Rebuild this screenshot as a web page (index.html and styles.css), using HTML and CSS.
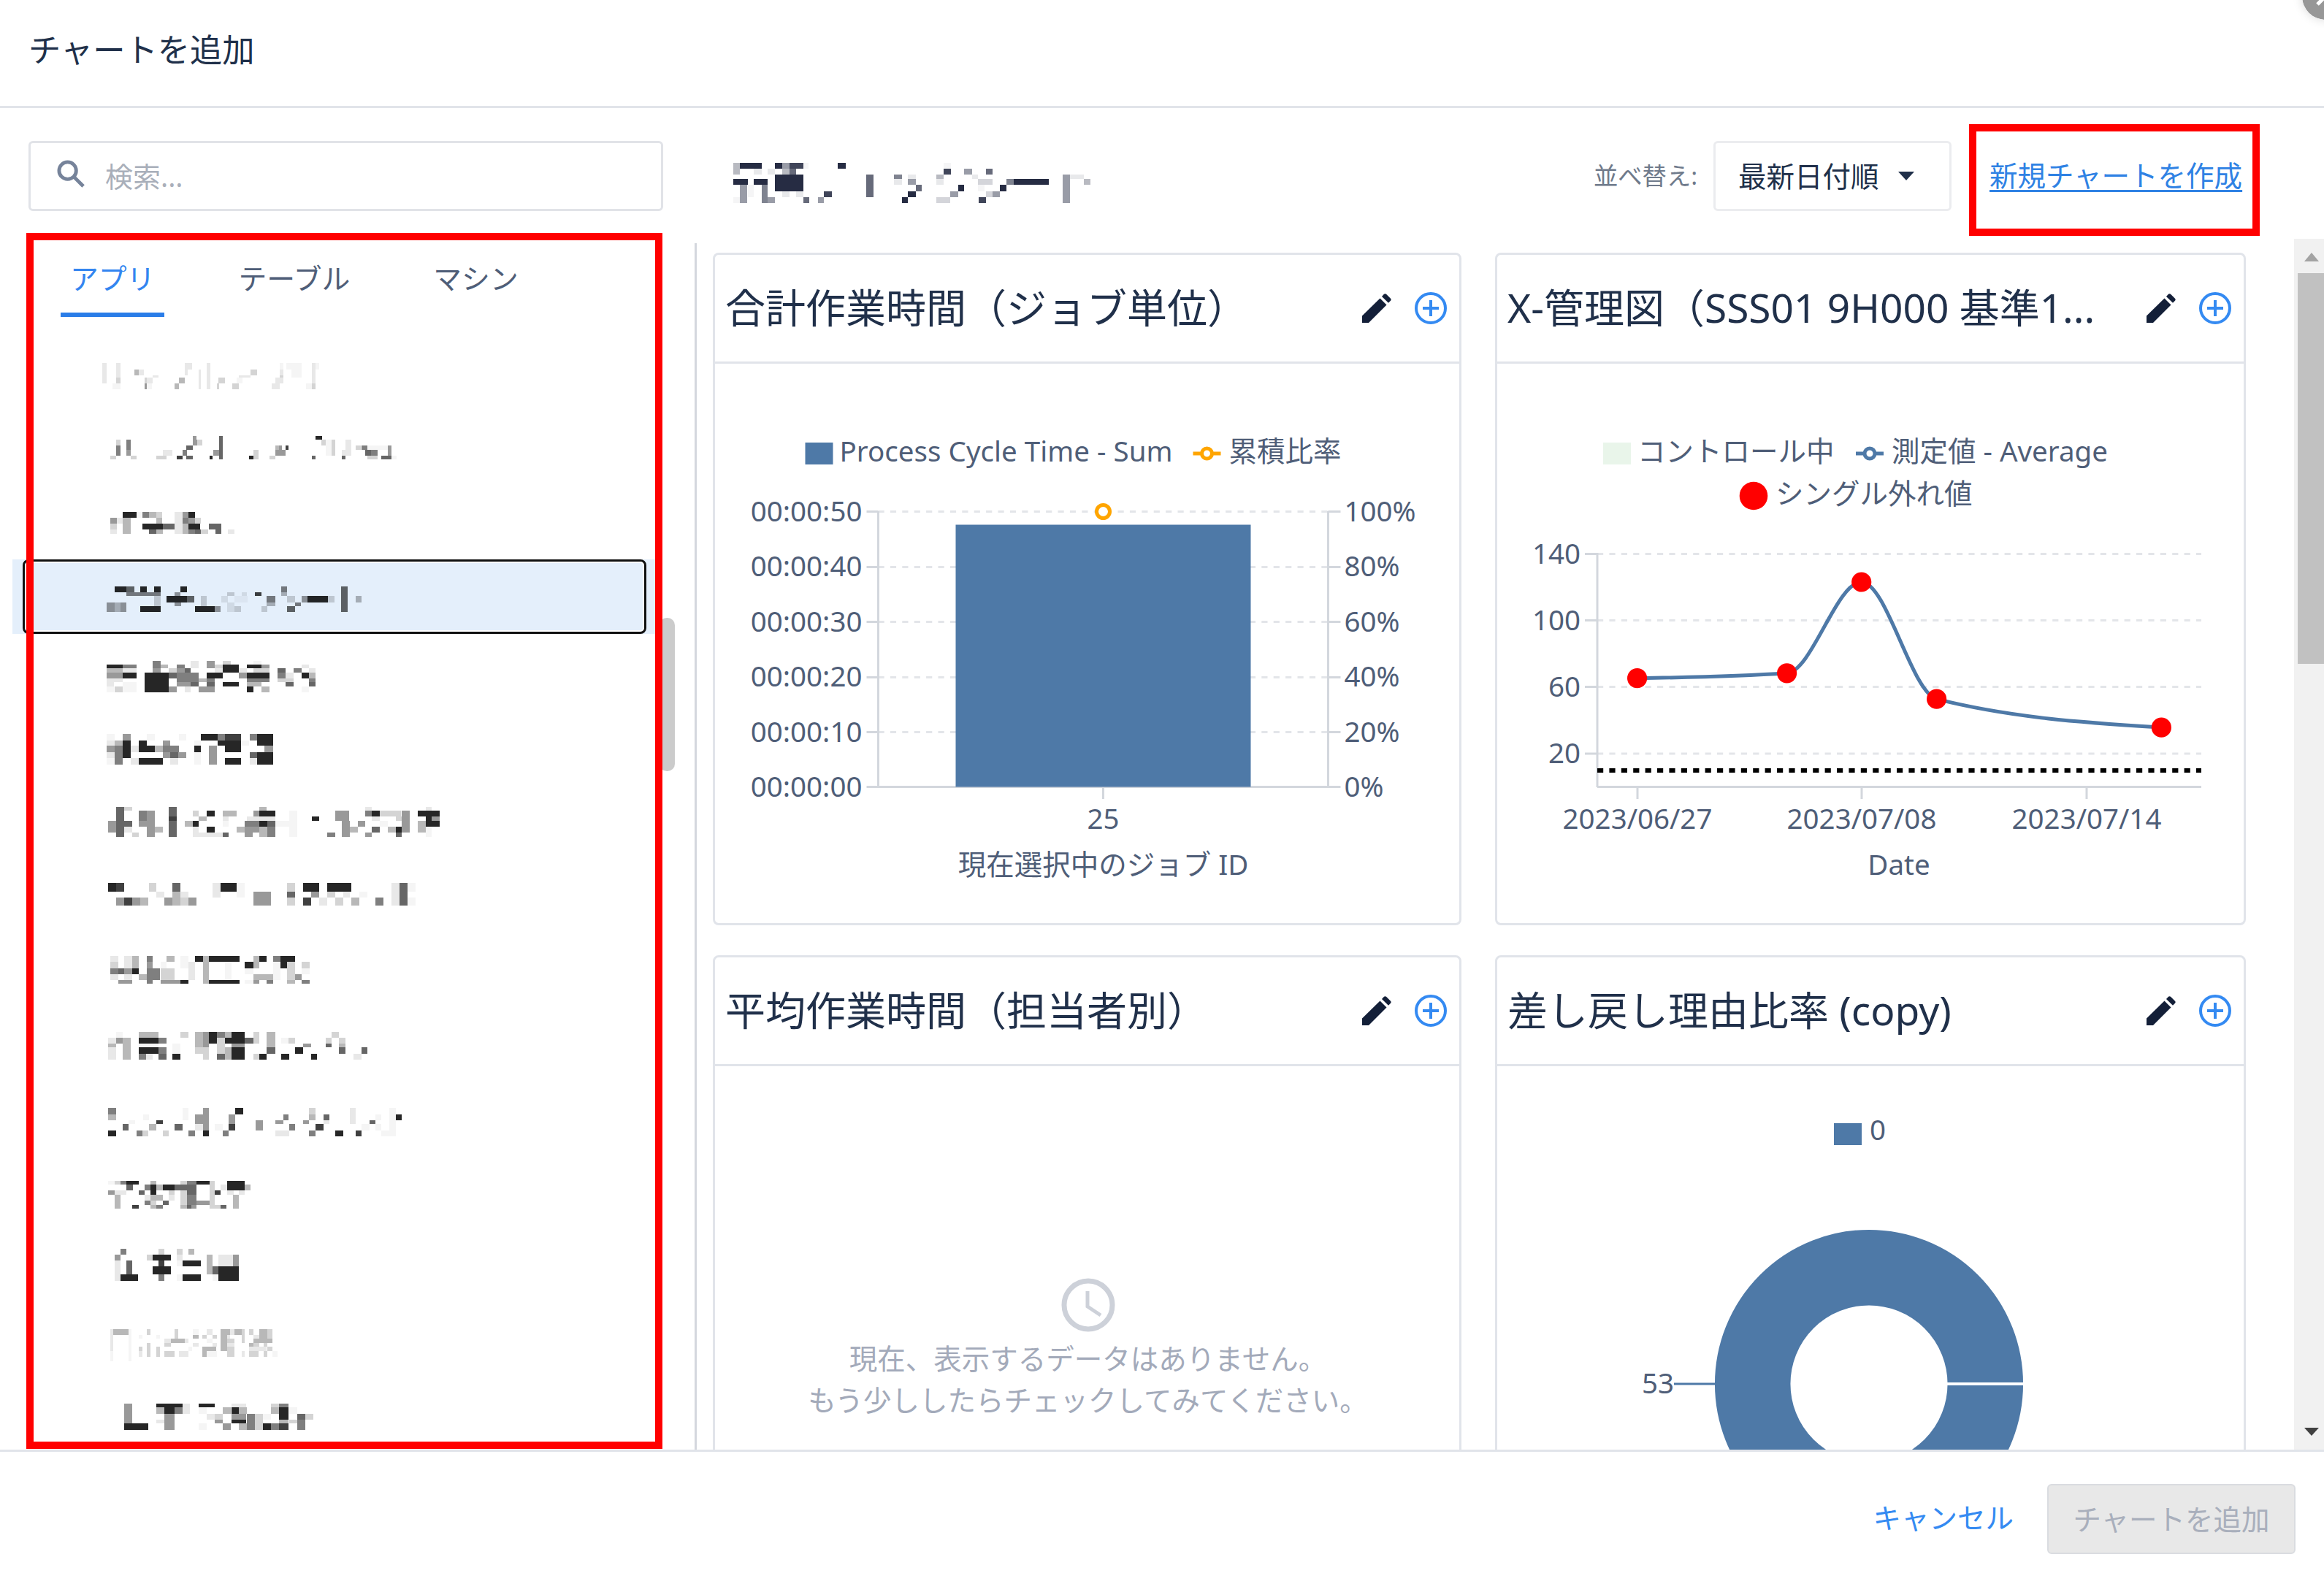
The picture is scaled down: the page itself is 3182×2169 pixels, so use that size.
FILE: index.html
```html
<!DOCTYPE html>
<html lang="ja">
<head>
    <meta charset="UTF-8">
    <meta name="viewport" content="width=device-width, initial-scale=1.0">
    <title>チャートを追加</title>
    <link rel="stylesheet" href="styles.css">
</head>
<body>
    <svg class="defs">
        <symbol id="pencil" viewBox="0 0 40 40">
            <path d="M0 40v-9.500L24.500 6.500l9 9L9 40z"/>
            <path d="M27 4l3-3.200q1.500-1.200 3 0l6 6q1.300 1.500 0 3L36 12.800z"/>
        </symbol>
        <symbol id="plus" viewBox="0 0 44 44">
            <circle cx="22" cy="22" r="20"/>
            <path d="M22 11v22M11 22h22"/>
        </symbol>
    </svg>

    <div class="modal">
        <div class="header">チャートを追加</div>

        <div class="toolbar">
            <div class="search">
                <svg class="search-icon" viewBox="0 0 40 40"><circle cx="15" cy="15" r="12"/><path d="M24 24l13 13"/></svg>
                <span>検索...</span>
            </div>
            <svg class="mosaic heading" id="heading" viewBox="88 248 706 164" preserveAspectRatio="none"></svg>
            <div class="sort-label">並べ替え:</div>
            <div class="select">最新日付順<span class="caret"></span></div>
            <a class="new-chart">新規チャートを作成</a>
        </div>

        <div class="content">
            <div class="sidebar">
                <div class="tabs">
                    <div class="tab active">アプリ</div>
                    <div class="tab">テーブル</div>
                    <div class="tab">マシン</div>
                </div>
                <div class="list" id="list"></div>
                <div class="side-thumb"></div>
            </div>
            <div class="divider"></div>

            <div class="cards">
                <div class="card">
                    <div class="card-header">
                        <span class="card-title">合計作業時間（ジョブ単位）</span>
                        <svg class="pencil"><use href="#pencil"/></svg>
                        <svg class="plus"><use href="#plus"/></svg>
                    </div>
                    <svg class="chart" viewBox="980 498 1018 766">
                        <rect class="bar" x="1103" y="606" width="38" height="30"/>
                        <text x="1150" y="632" textLength="456">Process Cycle Time - Sum</text>
                        <path class="orange" d="M1634 621h38"/>
                        <circle class="orange" cx="1653" cy="621" r="7"/>
                        <text x="1683" y="632">累積比率</text>
                        <path class="grid" d="M1203 700.500h616M1203 776.500h616M1203 851.500h616M1203 927.500h616M1203 1002.500h616"/>
                        <path class="axis" d="M1187 700.500h16M1187 776.500h16M1187 851.500h16M1187 927.500h16M1187 1002.500h16M1187 1077.500h649M1819 700.500h17M1819 776.500h17M1819 851.500h17M1819 927.500h17M1819 1002.500h17M1203 700v378M1819 700v378M1511 1078v16"/>
                        <rect class="bar" x="1309" y="718.500" width="404" height="359"/>
                        <circle class="orange" cx="1511" cy="700.500" r="9"/>
                        <g class="end">
                            <text x="1181" y="714">00:00:50</text>
                            <text x="1181" y="789">00:00:40</text>
                            <text x="1181" y="865">00:00:30</text>
                            <text x="1181" y="940">00:00:20</text>
                            <text x="1181" y="1016">00:00:10</text>
                            <text x="1181" y="1091">00:00:00</text>
                        </g>
                        <text x="1841" y="714">100%</text>
                        <text x="1841" y="789">80%</text>
                        <text x="1841" y="865">60%</text>
                        <text x="1841" y="940">40%</text>
                        <text x="1841" y="1016">20%</text>
                        <text x="1841" y="1091">0%</text>
                        <text class="mid" x="1511" y="1135">25</text>
                        <text class="mid" x="1511" y="1198">現在選択中のジョブ ID</text>
                    </svg>
                </div>

                <div class="card">
                    <div class="card-header">
                        <span class="card-title">X-管理図（SSS01 9H000 基準1...</span>
                        <svg class="pencil"><use href="#pencil"/></svg>
                        <svg class="plus"><use href="#plus"/></svg>
                    </div>
                    <svg class="chart" viewBox="2050 498 1022 766">
                        <rect class="control" x="2195" y="606" width="38" height="30"/>
                        <text x="2242" y="632">コントロール中</text>
                        <path class="line" d="M2541 621h38"/>
                        <circle class="line open" cx="2560" cy="621" r="7"/>
                        <text x="2590" y="632">測定値 - Average</text>
                        <circle class="red" cx="2401" cy="679" r="19.300"/>
                        <text x="2431" y="690">シングル外れ値</text>
                        <path class="grid" d="M2187 758.500h827M2187 849.500h827M2187 940.500h827M2187 1032h827"/>
                        <path class="axis" d="M2170 758.500h17M2170 849.500h17M2170 940.500h17M2170 1032h17M2187 757v321M2187 1077.500h827M2242 1078v16M2549 1078v16M2857 1078v16"/>
                        <path class="limit" d="M2187 1055h827"/>
                        <path class="line" d="M2241.600 928.700C2310 927.600 2378.300 926.400 2446.600 921.800C2480.600 919.500 2514.700 797 2548.700 797C2583 797 2617.300 948.500 2651.600 957.200C2754.200 983.300 2856.800 989.700 2959.400 996.200"/>
                        <circle class="red" cx="2241.600" cy="928.700" r="13.600"/>
                        <circle class="red" cx="2446.600" cy="921.800" r="13.600"/>
                        <circle class="red" cx="2548.700" cy="797" r="13.600"/>
                        <circle class="red" cx="2651.600" cy="957.200" r="13.600"/>
                        <circle class="red" cx="2959.400" cy="996.200" r="13.600"/>
                        <g class="end">
                            <text x="2164" y="772">140</text>
                            <text x="2164" y="863">100</text>
                            <text x="2164" y="954">60</text>
                            <text x="2164" y="1045">20</text>
                        </g>
                        <g class="mid">
                            <text x="2242" y="1135">2023/06/27</text>
                            <text x="2549" y="1135">2023/07/08</text>
                            <text x="2857" y="1135">2023/07/14</text>
                            <text x="2600" y="1198">Date</text>
                        </g>
                    </svg>
                </div>

                <div class="card">
                    <div class="card-header">
                        <span class="card-title">平均作業時間（担当者別）</span>
                        <svg class="pencil"><use href="#pencil"/></svg>
                        <svg class="plus"><use href="#plus"/></svg>
                    </div>
                    <div class="empty">
                        <svg class="clock" viewBox="0 0 74 74"><circle cx="37" cy="37" r="33"/><path d="M36 18v21l18 12"/></svg>
                        <div>現在、表示するデータはありません。</div>
                        <div>もう少ししたらチェックしてみてください。</div>
                    </div>
                </div>

                <div class="card">
                    <div class="card-header">
                        <span class="card-title">差し戻し理由比率 (copy)</span>
                        <svg class="pencil"><use href="#pencil"/></svg>
                        <svg class="plus"><use href="#plus"/></svg>
                    </div>
                    <svg class="chart" viewBox="2050 1460 1022 766">
                        <rect class="bar" x="2511" y="1538" width="38" height="30"/>
                        <text x="2560" y="1561">0</text>
                        <circle class="donut" cx="2559" cy="1895" r="159.300"/>
                        <path class="cut" d="M2666 1895h105"/>
                        <path class="leader" d="M2292 1895h56"/>
                        <text class="end" x="2292" y="1908">53</text>
                    </svg>
                </div>
            </div>

            <div class="scrollbar">
                <span class="arrow-up"></span>
                <div class="thumb"></div>
                <span class="arrow-down"></span>
            </div>
        </div>

        <div class="footer">
            <div class="cancel">キャンセル</div>
            <div class="submit">チャートを追加</div>
        </div>

        <svg class="close" viewBox="0 0 64 64"><circle cx="32" cy="32" r="32"/><path d="M21 43l22-22M21 21l22 22"/></svg>
        <div class="mark mark-list"></div>
        <div class="mark mark-link"></div>
    </div>
    <script src="mosaic.js"></script>
</body>
</html>
```
FILE: styles.css
```css
*, *::after{
    box-sizing: border-box;
}
body{
    margin: 0px;
    background-color: #fff;
    color: #4f5e78;
    font-family: "Noto Sans", "Noto Sans CJK JP", sans-serif;
    font-size: 38.5px;
    line-height: 57px;
}
.defs{
    display: none;
}
.modal{
    position: relative;
    width: 3182px;
    height: 2169px;
    overflow: hidden;
    display: flex;
    flex-direction: column;
}
.header{
    height: 148px;
    padding: 40px 39px;
    border-bottom: solid 3px #e1e4ea;
    font-size: 44.3px;
    color: #20304a;
}
.toolbar{
    height: 179px;
    display: flex;
    align-items: flex-start;
    padding-top: 45px;
    white-space: nowrap;
}
.search{
    width: 869px;
    height: 96px;
    margin-left: 39px;
    padding-left: 36px;
    display: flex;
    align-items: center;
    border: solid 3px #e1e3e8;
    border-radius: 6px;
    font-size: 38px;
    color: #a9afba;
}
.search-icon{
    width: 39px;
    height: 39px;
    margin: -6px 27px 0px 0px;
    fill: none;
    stroke: #76839a;
    stroke-width: 5;
}
.mosaic{
    display: block;
    shape-rendering: crispEdges;
}
.heading{
    width: 495px;
    height: 55px;
    margin: 30px 0px 0px 94px;
    fill: #000722;
}
.sort-label{
    width: 164px;
    margin-left: 685px;
    font-size: 33.3px;
    line-height: 94px;
    color: #6f7a8b;
}
.select{
    width: 326px;
    height: 96px;
    padding-left: 31px;
    display: flex;
    align-items: center;
    border: solid 3px #ebecef;
    border-radius: 6px;
    color: #20304a;
}
.caret{
    margin-left: 26px;
    border: solid 11px transparent;
    border-top: solid 12px #20304a;
    border-bottom: none;
}
.new-chart{
    margin-left: 52px;
    line-height: 94px;
    color: #2f82e4;
    text-decoration: underline;
    text-decoration-thickness: 3px;
    text-underline-offset: 5px;
}
.content{
    height: 1658px;
    display: flex;
    overflow: hidden;
}
.sidebar{
    position: relative;
    width: 951px;
}
.tabs{
    display: flex;
    height: 107px;
    margin-left: 83px;
    gap: 88px;
}
.tab{
    padding: 26px 13px 0px;
    font-size: 38.8px;
}
.active{
    color: #3385f0;
    border-bottom: solid 6px #2a7de8;
}
.list{
    margin: 27px 0px 0px 17px;
    width: 880px;
}
.item{
    height: 101.7px;
}
.item .mosaic{
    width: 880px;
    height: 101.7px;
}
.selected{
    position: relative;
    background-color: #e4effb;
}
.selected::after{
    content: "";
    position: absolute;
    left: 14px;
    top: 0px;
    width: 854px;
    height: 102px;
    border: solid 3px #101010;
    border-radius: 8px;
    box-shadow: inset 0px 0px 0px 2px #fff;
}
.side-thumb{
    position: absolute;
    left: 903px;
    top: 519px;
    width: 21px;
    height: 210px;
    border-radius: 10px;
    background-color: #cbcbcb;
}
.divider{
    width: 3px;
    margin-top: 6px;
    background-color: #d4d7de;
}
.cards{
    margin: 19px 0px 0px 22px;
    width: 2099px;
    display: grid;
    grid-template-columns: 1025px 1028px;
    grid-template-rows: 921px 921px;
    gap: 41px 46px;
}
.card{
    border: solid 3px #e1e4ea;
    border-radius: 8px;
}
.card-header{
    height: 149px;
    padding: 0px 17px 0px 14px;
    display: flex;
    align-items: center;
    border-bottom: solid 3px #e1e4ea;
}
.card-title{
    flex: 1;
    margin-top: -3px;
    font-size: 55px;
    white-space: nowrap;
    color: #20304a;
}
.pencil{
    width: 40px;
    height: 40px;
    fill: #131f38;
}
.plus{
    width: 44px;
    height: 44px;
    margin-left: 32px;
    fill: none;
    stroke: #348af2;
    stroke-width: 4;
}
.chart{
    display: block;
    width: 100%;
    height: 766px;
}
.chart text{
    fill: #4f5e78;
    font-size: 38.5px;
}
.bar{
    fill: #4e79a7;
}
.control{
    fill: #e9f5ea;
}
.grid, .axis{
    fill: none;
    stroke: #d3d7dd;
    stroke-width: 3;
}
.grid{
    stroke: #e3e5e9;
    stroke-dasharray: 8.2;
}
.orange{
    fill: #fff;
    stroke: #ffa500;
    stroke-width: 5;
}
.line{
    fill: none;
    stroke: #4e79a7;
    stroke-width: 5;
}
.open{
    fill: #fff;
}
.red{
    fill: #f00;
}
.limit{
    stroke: #000;
    stroke-width: 6;
    stroke-dasharray: 8.2;
}
.donut{
    fill: none;
    stroke: #4e79a7;
    stroke-width: 103.5;
}
.cut{
    stroke: #fff;
    stroke-width: 4;
}
.leader{
    stroke: #4e79a7;
    stroke-width: 3;
}
.end{
    text-anchor: end;
}
.mid{
    text-anchor: middle;
}
.empty{
    padding: 290px 0px 0px 2px;
    text-align: center;
    color: #a3aaba;
}
.clock{
    display: block;
    width: 74px;
    height: 74px;
    margin: 0px auto 8px;
    fill: none;
    stroke: #cdd1d9;
    stroke-width: 7;
}
.clock path{
    stroke-width: 5;
}
.scrollbar{
    width: 41px;
    margin-left: 66px;
    display: flex;
    flex-direction: column;
    align-items: center;
    background-color: #f1f1f1;
}
.thumb{
    width: 36px;
    height: 535px;
    margin: 16px 0px auto 5px;
    background-color: #c1c1c1;
}
.arrow-up, .arrow-down{
    margin: 19px 0px 0px 6px;
    border: solid 10px transparent;
}
.arrow-up{
    border-top: none;
    border-bottom: solid 12px #a3a3a3;
}
.arrow-down{
    margin: 0px 0px 19px 6px;
    border-bottom: none;
    border-top: solid 11px #404040;
}
.footer{
    height: 184px;
    padding: 44px 39px 0px 0px;
    display: flex;
    justify-content: flex-end;
    border-top: solid 3px #e1e4ea;
    line-height: 93px;
}
.cancel{
    margin-right: 46px;
    color: #348af2;
}
.submit{
    width: 340px;
    height: 96px;
    border: solid 2px #dadce0;
    border-radius: 6px;
    background-color: #e8e8e8;
    color: #a9afbc;
    text-align: center;
}
.close{
    position: absolute;
    left: 3152px;
    top: -37px;
    width: 64px;
    height: 64px;
    border-radius: 50%;
    fill: #979797;
    stroke: #fff;
    stroke-width: 0;
    box-shadow: 0px 0px 14px rgba(0, 0, 0, 0.15);
}
.close path{
    stroke-width: 5;
}
.mark{
    position: absolute;
    border: solid 10px #f00;
}
.mark-list{
    left: 36px;
    top: 319px;
    width: 871px;
    height: 1665px;
}
.mark-link{
    left: 2696px;
    top: 170px;
    width: 398px;
    height: 153px;
}
```
FILE: mosaic.js
```js
// every row of blocks: [y, height, "x,width,shade ..."]
const shades = [0, 0.04, 0.09, 0.17, 0.28, 0.4, 0.5, 0.6, 0.75, 0.85];

const heading = [
    [248, 24, "91,12,4 103,43,9 172,14,9 186,14,5 200,28,8 228,10,1 295,15,9 502,14,1"],
    [272, 25, "91,12,4 131,15,2 158,14,2 186,14,4 200,14,7 502,14,8 542,15,5 585,12,7"],
    [297, 17, "172,56,9 350,15,7 405,15,6 432,15,2 488,14,4 557,12,2 734,15,5 749,27,2"],
    [314, 24, "91,28,9 131,27,9 172,56,9 350,15,7 405,15,2 432,15,5 488,14,2 569,28,3 624,14,6 638,69,9 734,15,5 776,13,4"],
    [338, 25, "103,15,5 119,12,1 146,12,6 172,56,9 350,15,7 447,12,7 530,12,9 569,12,1 612,12,9 734,15,5"],
    [363, 25, "103,15,5 119,12,1 146,12,6 186,14,2 214,14,2 268,15,8 350,15,7 432,15,9 515,15,5 585,12,3 597,15,5 734,15,5"],
    [388, 24, "91,12,1 103,15,5 146,12,6 158,14,5 228,11,7 256,11,5 421,11,9 488,26,3 570,14,8 734,15,5"]
];

const items = [
    { top: 3, h: 285, rows: [
        [105, 23, "229,9,2 260,9,2 413,17,2 462,9,2 625,8,1 641,34,1 697,9,2 706,8,1"],
        [128, 23, "229,9,2 260,9,2 301,9,4 310,12,2 413,6,2 445,4,2 462,9,2 561,14,3 625,8,2 651,24,1 697,9,2"],
        [151, 9, "229,9,2 260,9,2 341,14,2 445,4,2 462,9,2 534,27,2 625,8,3 651,24,1 697,9,2"],
        [160, 23, "229,9,2 260,9,3 323,5,3 328,14,2 400,13,4 445,4,2 462,9,2 489,14,3 530,12,1 615,18,2 697,9,2"],
        [183, 22, "252,17,1 323,5,5 328,12,1 390,10,4 445,4,2 462,9,2 485,5,3 520,14,3 607,18,2 685,12,1 697,9,3"]
    ]},
    { top: 288, h: 285, rows: [
        [382, 15, "432,8,5 490,8,7 706,14,9"],
        [397, 24, "260,9,3 283,9,6 432,9,5 441,12,3 490,8,7 719,9,3 728,14,1 742,8,3 772,14,2"],
        [421, 15, "260,9,6 283,9,6 417,14,7 490,8,7 615,9,4 624,7,5 638,8,8 728,13,1 742,8,3 772,14,2 795,12,3 808,14,6 822,45,1 867,9,5"],
        [436, 22, "260,9,6 283,9,5 364,22,2 409,9,6 477,13,5 490,8,7 566,12,3 615,24,5 728,13,1 742,8,3 764,22,2 817,13,7 830,14,6 867,9,5"],
        [458, 16, "247,13,3 292,13,3 350,22,3 396,13,8 417,14,7 468,8,9 490,8,7 557,9,9 566,12,3 602,13,3 697,8,7 764,8,7 822,22,3 853,22,7 875,12,1"]
    ]},
    { top: 572, h: 285, rows: [
        [675, 22, "274,31,9 305,12,1 318,16,6 334,15,4 349,14,3 391,17,2 408,14,5 422,14,9"],
        [697, 23, "247,14,5 261,13,2 274,18,4 349,14,4 391,17,2 408,14,6 422,14,5 436,13,3"],
        [720, 23, "247,14,3 274,18,4 318,46,9 364,27,7 391,17,2 408,14,4 422,26,9 467,28,7"],
        [743, 17, "247,14,2 274,18,4 334,16,7 350,14,4 391,17,2 408,14,4 422,14,6 436,13,7 450,16,3 482,13,7 509,16,2"]
    ]},
    { top: 857, h: 285, rows: [
        [960, 22, "256,27,9 283,18,7 314,14,9 345,15,9 403,15,9 629,13,6 763,14,7"],
        [982, 16, "283,18,6 301,27,6 328,32,6 391,12,5 508,17,3 540,12,2 570,14,8 629,13,4 763,14,7"],
        [998, 23, "345,15,3 373,45,9 418,17,7 450,12,3 495,15,2 525,28,1 597,18,6 642,18,3 674,13,5 687,46,9 733,15,3 763,14,7 795,13,4"],
        [1021, 14, "238,18,5 256,14,4 270,13,5 345,15,3 391,14,5 450,12,3 508,17,2 597,18,4 660,13,6 763,14,7"],
        [1035, 24, "238,18,5 256,14,4 270,13,5 314,45,9 436,45,9 481,13,5 508,17,2 525,14,3 584,14,3 642,18,7 763,14,7"]
    ]},
    { top: 1142, h: 285, rows: [
        [1245, 15, "341,18,6 427,17,2 463,18,5 499,17,3 567,17,1"],
        [1260, 15, "238,36,9 274,31,6 341,18,6 359,17,4 396,17,6 427,17,2 463,18,5 481,18,3 499,35,9 552,32,9 584,18,5 674,17,2"],
        [1275, 16, "238,36,4 274,31,2 341,18,5 377,19,3 396,17,5 413,14,7 481,18,2 499,35,9 534,18,2 567,35,3 620,18,7 656,18,6 691,14,2"],
        [1291, 21, "238,36,5 274,31,9 323,54,9 377,19,7 396,48,6 463,35,9 534,18,5 552,50,9 620,18,6 638,18,2 674,17,9 691,14,4"],
        [1312, 16, "238,36,2 323,54,9 396,17,6 413,31,6 444,19,4 463,18,6 552,50,6 620,36,3 691,14,6"],
        [1328, 17, "238,17,2 274,31,1 323,54,9 396,30,5 427,17,7 463,18,7 499,35,9 552,32,4 638,18,7 691,14,7"],
        [1345, 21, "238,17,1 256,18,3 274,31,1 323,54,9 377,19,5 413,14,2 444,37,5 552,14,9 584,18,4 674,17,1"]
    ]},
    { top: -91, h: 305, rows: [
        [18, 25, "238,18,1 274,18,5 328,18,1 400,17,1 450,36,9 486,17,6 503,36,8 558,17,6 575,36,9"],
        [43, 23, "238,18,2 256,18,4 274,18,9 310,18,9 364,17,5 435,14,1 486,53,9 539,18,1 575,36,9"],
        [66, 26, "238,18,5 256,18,6 274,18,9 292,18,2 310,36,9 346,18,4 364,36,6 435,14,9 467,18,5 503,36,9 592,19,5"],
        [92, 25, "238,18,2 256,18,6 274,18,9 364,17,5 381,18,7 399,18,5 435,14,1 467,18,5 558,17,7 575,36,9"],
        [117, 25, "238,18,1 256,18,6 292,18,2 310,54,9 381,18,2 435,14,1 467,18,5 503,36,9 558,17,2 575,36,9"]
    ]},
    { top: 214, h: 305, rows: [
        [315, 15, "260,18,7 278,18,3 377,18,7 580,17,4 817,14,2 952,14,2"],
        [330, 25, "260,18,7 310,18,6 328,18,5 377,18,7 431,14,3 463,18,9 499,30,4 567,13,5 580,35,9 647,18,1 750,31,5 817,14,6 831,18,9 849,48,3 898,18,5 934,50,9"],
        [355, 18, "260,18,7 310,18,6 328,18,5 377,18,8 445,18,4 499,13,2 552,63,2 647,18,1 697,17,9 750,31,5 831,18,2 885,13,3 898,18,5 952,14,9 966,18,5"],
        [373, 24, "242,18,5 260,36,7 310,36,5 377,18,7 413,18,4 431,14,9 499,13,1 548,32,6 580,18,9 598,17,7 615,50,1 764,18,5 800,17,5 849,18,1 898,18,5 934,18,4 952,32,9"],
        [397, 25, "242,18,5 260,18,7 278,18,2 328,18,5 346,18,4 377,18,7 431,14,2 463,18,9 530,18,4 548,32,5 580,18,4 598,17,6 647,18,1 764,18,5 782,18,4 831,18,7 867,18,4 885,13,9 898,18,5 934,18,4 952,14,1"],
        [422, 16, "260,18,7 296,14,3 328,18,5 377,18,7 431,67,2 499,13,7 548,17,5 580,18,4 598,17,6 647,18,1 732,18,6 764,18,5 817,14,5 885,13,7 952,14,1"]
    ]},
    { top: 519, h: 305, rows: [
        [628, 34, "242,18,9 260,18,8 333,17,3 386,18,7 476,18,2 494,36,9 530,17,1 642,18,3 678,36,9 732,54,9 875,18,2 893,18,7 911,18,1"],
        [662, 25, "350,18,2 386,18,4 404,18,2 476,18,2 530,17,1 567,39,5 642,18,7 696,18,5 732,18,3 768,14,2 804,18,1 875,18,2 893,18,7"],
        [687, 32, "260,18,5 278,18,8 296,18,5 314,18,4 368,18,5 386,18,4 404,18,3 422,18,5 567,39,5 642,18,3 678,18,8 714,18,2 750,18,3 786,18,4 840,18,6 875,18,2 893,18,7 911,18,1"]
    ]},
    { top: 824, h: 305, rows: [
        [925, 25, "247,17,2 278,18,2 296,14,4 328,13,6 373,17,4 404,18,1 436,18,9 454,13,4 467,68,9 566,14,4 580,17,9 611,17,6 628,32,9"],
        [950, 26, "247,17,3 278,18,2 296,14,4 328,13,5 359,14,1 404,18,1 422,14,2 454,13,4 503,14,1 548,18,9 566,14,4 611,17,1 628,14,9 642,18,3 674,18,3"],
        [976, 24, "247,17,6 264,14,7 278,18,5 296,14,9 328,30,6 359,31,3 422,14,2 454,13,4 503,14,1 548,18,1 611,17,1 642,18,3 674,18,1"],
        [1000, 25, "247,17,2 278,18,2 310,18,4 328,30,6 359,31,3 422,14,2 454,13,4 503,14,1 566,45,4 611,17,1 642,18,3 660,14,5"],
        [1025, 16, "264,32,5 328,13,6 359,45,5 404,18,9 454,13,4 467,68,9 548,18,1 566,14,5 597,14,6 642,18,4 674,18,6"]
    ]},
    { top: 1129, h: 305, rows: [
        [1240, 23, "260,14,1 310,44,4 404,18,3 436,18,4 454,13,5 467,18,9 485,18,6 503,14,4 517,31,9 566,14,3 597,18,4 741,17,3"],
        [1263, 24, "242,18,2 260,14,5 274,18,4 310,44,9 354,18,6 436,18,4 454,13,5 467,18,9 485,18,3 503,45,9 548,18,7 566,14,3 597,18,4 629,17,1 646,14,3 728,13,3 758,14,3"],
        [1287, 17, "242,18,4 274,18,4 310,44,1 386,18,1 436,18,4 454,13,5 485,18,3 517,31,5 597,18,4 678,18,5 728,13,7 758,14,4"],
        [1304, 25, "242,18,2 274,18,4 310,44,9 354,18,6 386,18,1 436,18,3 454,13,3 485,18,3 503,14,4 517,31,9 597,18,7 660,18,9 758,14,7 808,14,7"],
        [1329, 25, "242,18,2 274,18,4 310,17,6 327,14,2 354,18,7 386,18,9 454,13,3 485,18,7 503,14,4 517,31,9 566,14,3 580,17,9 629,18,9 696,13,9 791,17,2"]
    ]},
    { top: -6, h: 305, rows: [
        [112, 25, "242,18,6 409,13,1 454,13,5 526,18,9 691,14,3 782,13,2 871,14,1"],
        [137, 24, "242,18,4 320,13,1 409,13,1 436,31,5 512,14,5 633,13,6 691,14,4 723,14,7 782,13,2 840,13,1 871,14,1 885,13,9"],
        [161, 17, "288,14,1 350,14,8 436,18,5 454,13,5 512,14,5 571,17,5 615,18,5 678,13,5 723,14,2 782,13,2 826,14,7 871,14,1"],
        [178, 25, "274,14,7 333,17,4 391,18,7 436,18,2 454,13,5 481,17,1 512,14,8 571,17,5 647,13,6 705,18,8 808,18,1 840,13,1 871,14,1"],
        [203, 25, "242,18,9 305,13,6 318,14,3 364,13,3 422,14,6 454,13,9 499,13,6 615,32,2 691,14,6 750,18,9 795,13,8 853,32,1"]
    ]},
    { top: 299, h: 305, rows: [
        [409, 16, "242,14,1 256,13,3 269,14,6 283,27,9 337,13,4 404,14,3 418,22,6 440,28,9 468,13,3 508,40,9"],
        [425, 25, "283,14,7 323,14,6 337,13,9 350,14,4 364,27,9 391,27,7 418,22,7 468,13,3 494,14,2 508,40,9 548,13,4"],
        [450, 17, "242,14,5 256,27,2 310,13,7 337,13,9 377,13,3 404,14,3 418,22,7 468,13,3 481,13,8 508,14,2 534,14,2"],
        [467, 24, "256,13,4 323,14,2 337,27,4 377,13,2 404,14,3 418,22,6 468,13,3 521,13,4"],
        [491, 17, "256,13,4 323,14,6 337,13,3 364,13,7 404,14,3 418,22,6 440,28,5 468,13,3 521,13,4"],
        [508, 16, "256,13,4 296,14,8 337,13,4 350,14,6 404,14,4 418,10,7 428,12,5 468,26,3 494,13,7 521,13,4"]
    ]},
    { top: 604, h: 305, rows: [
        [690, 24, "269,14,6 355,13,3 395,14,3 422,13,4"],
        [714, 25, "256,13,5 328,14,3 342,40,9 395,14,2 463,13,4 489,32,2 521,13,5"],
        [739, 25, "256,13,2 283,13,7 355,13,8 395,14,1 409,40,9 463,13,4 489,32,2 521,13,5"],
        [764, 33, "256,13,2 283,13,7 342,40,9 463,13,4 476,13,7 489,45,9"],
        [797, 25, "256,13,2 269,40,9 355,13,6 395,14,1 409,40,9 476,13,1 489,45,9"]
    ]},
    { top: 909, h: 305, rows: [
        [1020, 24, "247,7,2 254,34,4 288,6,1 328,8,3 391,8,3 432,12,1 463,12,2 494,20,4 514,10,2 524,17,4 541,6,3 557,9,3 580,18,4 598,12,3"],
        [1044, 16, "247,7,2 288,6,1 310,8,1 350,8,1 391,8,3 432,12,4 453,10,3 476,9,3 494,14,4 508,7,2 541,6,3 566,14,2 580,18,4 598,12,3"],
        [1060, 17, "247,7,2 288,6,1 368,14,2 382,32,4 414,8,2 463,12,1 494,14,4 508,16,3 541,6,3 566,44,4"],
        [1077, 16, "247,7,2 288,6,1 328,8,3 368,14,3 432,12,2 476,9,2 494,14,4 508,16,2 557,9,4 566,14,3 589,9,3"],
        [1093, 16, "247,7,2 288,6,1 310,8,3 328,8,3 350,8,3 422,8,1 453,31,4 494,14,4 508,16,3 557,40,2 598,12,3"],
        [1109, 26, "247,7,1 288,6,1 310,8,2 328,8,3 350,8,3 368,22,3 400,22,2 453,10,4 463,22,1 508,16,3 541,6,2 557,22,3 589,9,3 610,10,1"],
        [1135, 16, "247,7,1 288,6,1"]
    ]},
    { top: 1214, h: 305, rows: [
        [1325, 16, "278,18,5 350,58,9 409,16,2 445,36,9 517,34,2 606,18,3 624,22,6"],
        [1341, 25, "278,18,5 350,18,4 368,23,9 391,18,6 409,16,2 445,17,1 499,17,4 517,17,9 534,18,4 606,18,4 624,22,9 647,18,1"],
        [1366, 25, "278,18,5 368,23,5 463,18,2 481,18,3 517,34,5 552,18,6 570,18,3 588,18,1 624,22,9 665,18,7 683,18,3"],
        [1391, 16, "278,18,5 350,18,2 368,23,5 481,18,5 517,34,9 552,18,6 570,18,3 624,22,4 647,18,3 665,18,6"],
        [1407, 25, "278,53,9 368,23,5 445,17,1 499,17,5 534,18,4 552,18,6 570,18,3 588,18,9 606,18,6 624,22,8 665,18,6"]
    ]}
];

function blocks(rows){
    let out = "";
    rows.forEach(([y, h, cells]) => {
        cells.split(" ").forEach(cell => {
            let [x, w, s] = cell.split(",");
            out += `<rect x="${x}" y="${y}" width="${w}" height="${h}" fill-opacity="${shades[s]}"/>`;
        });
    });
    return out;
}

document.getElementById("heading").innerHTML = blocks(heading);
document.getElementById("list").innerHTML = items.map((item, i) =>
    `<div class="item${i === 3 ? " selected" : ""}"><svg class="mosaic" viewBox="27.8 ${item.top} 1437.300 ${item.h}" preserveAspectRatio="none">${blocks(item.rows)}</svg></div>`
).join("");
```
